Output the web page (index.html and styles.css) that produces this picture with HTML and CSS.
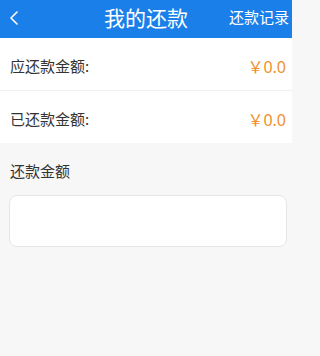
FILE: index.html
```html
<!DOCTYPE html>
<html lang="zh">
<head>
<meta charset="utf-8">
<link rel="stylesheet" href="styles.css">
</head>
<body>
<div class="page">
  <header class="bar">
    <div class="back">
      <svg width="10" height="14" viewBox="0 0 10 14"><path d="M8 1 L2 7 L8 13" fill="none" stroke="#fff" stroke-width="1.6" stroke-linecap="round" stroke-linejoin="round"/></svg>
    </div>
    <div class="title">我的还款</div>
    <div class="record">还款记录</div>
  </header>
  <div class="row row1">
    <span class="label">应还款金额:</span>
    <span class="amount">￥0.0</span>
  </div>
  <div class="row row2">
    <span class="label">已还款金额:</span>
    <span class="amount">￥0.0</span>
  </div>
  <section class="pay">
    <div class="pay-label">还款金额</div>
    <div class="input-box"></div>
  </section>
</div>
</body>
</html>
```
FILE: styles.css
```css
html, body {
  margin: 0;
  padding: 0;
  background: #f7f7f7;
  font-family: "Noto Sans CJK SC", "Noto Sans", sans-serif;
}
.page {
  width: 292px;
  min-height: 356px;
  background: #f7f7f7;
}
.bar {
  height: 38px;
  background: #1a7fe8;
  display: grid;
  grid-template-columns: 1fr auto 1fr;
  align-items: center;
  color: #fff;
}
.back {
  padding-left: 9px;
  display: flex;
  align-items: center;
  height: 100%;
  padding-bottom: 3px;
  box-sizing: border-box;
}
.back svg { display: block; }
.title {
  font-size: 21px;
  line-height: 24px;
  margin-top: -4px;
}
.record {
  justify-self: end;
  font-size: 15px;
  line-height: 20px;
  padding-right: 3px;
  margin-top: -4px;
}
.row {
  background: #fff;
  display: flex;
  justify-content: space-between;
  align-items: center;
  padding: 3px 6px 0 10px;
  box-sizing: border-box;
}
.row1 {
  height: 53px;
  border-bottom: 1px solid #f0f0f0;
}
.row2 {
  height: 52px;
}
.label {
  font-size: 15px;
  color: #333;
}
.amount {
  font-size: 16px;
  color: #f0902c;
  font-family: "Noto Sans", "Noto Sans CJK SC", sans-serif;
}
.amount::first-letter {
  font-family: "Noto Sans CJK SC", sans-serif;
}
.pay {
  padding: 18px 5px 0 9px;
}
.pay-label {
  font-size: 15px;
  line-height: 20px;
  color: #333;
  padding-left: 1px;
}
.input-box {
  margin-top: 14px;
  height: 52px;
  background: #fff;
  border: 1px solid #e6e6e6;
  border-radius: 8px;
  box-sizing: border-box;
}
```
